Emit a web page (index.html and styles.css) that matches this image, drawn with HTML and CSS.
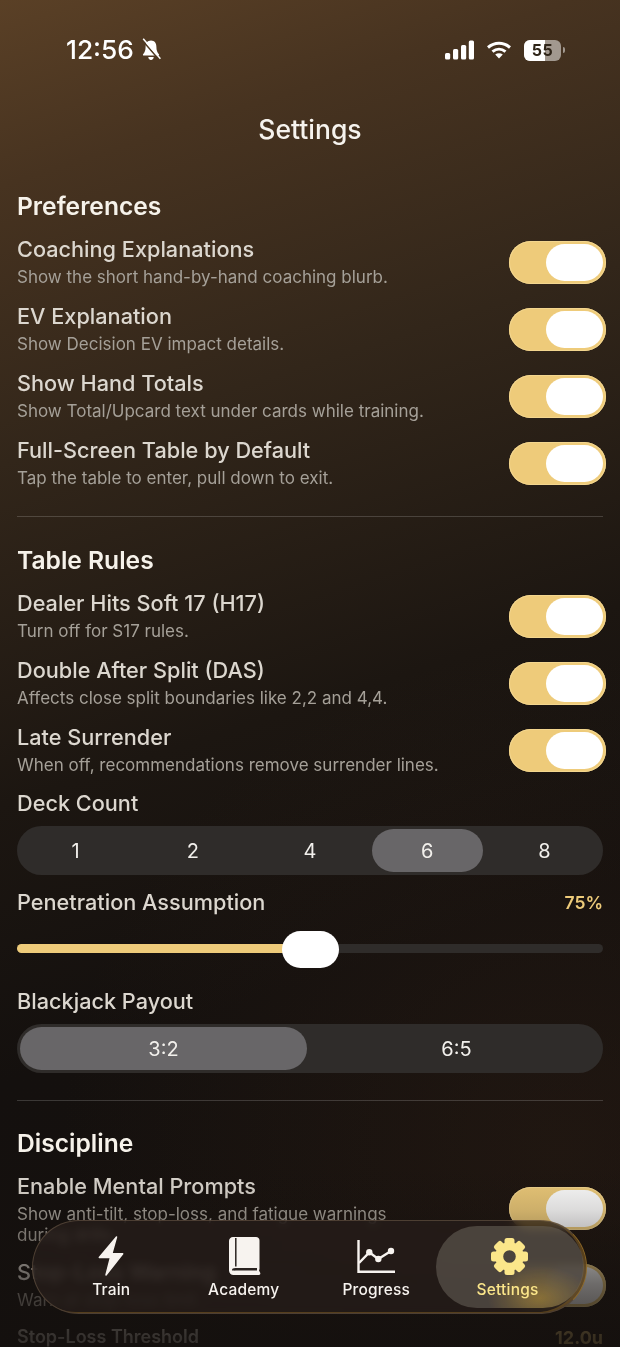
FILE: index.html
```html
<!DOCTYPE html>
<html lang="en">
<head>
<meta charset="utf-8">
<title>Settings</title>
<link rel="stylesheet" href="styles.css">
</head>
<body>
<div class="screen">
  <header class="status">
    <div class="status-left">
      <span class="time">12:56</span>
      <svg class="bell" viewBox="0 0 20 24" width="20" height="24"><path class="bell-body" d="M10 2.500c-3.600 0-5.400 2.800-5.400 6.200 0 3.700-.8 5.400-2.500 7.500-.5.600-.1 1.300.6 1.300h14.600c.7 0 1.100-.7.600-1.300-1.700-2.100-2.500-3.800-2.500-7.500 0-3.400-1.800-6.200-5.400-6.200z"/><path class="bell-body" d="M7.300 19h5.400c0 1.600-1.200 2.900-2.700 2.900s-2.700-1.300-2.700-2.900z"/><path class="bell-cut" d="M.8 1.800l17.800 20.400"/><path class="bell-slash" d="M2.200 .8l17.200 20"/></svg>
    </div>
    <div class="status-right">
      <svg viewBox="0 0 29 20" width="29" height="20" class="signal"><rect x="0" y="13" width="5.200" height="6.500" rx="1.500"/><rect x="8" y="9" width="5.200" height="10.500" rx="1.500"/><rect x="16" y="5" width="5.200" height="14.500" rx="1.500"/><rect x="23.800" y=".5" width="5.200" height="19" rx="1.500"/></svg>
      <svg viewBox="0 0 26 20" width="26" height="20" class="wifi"><path class="wifi-arc" d="M2 7.500c6.500-5.600 15.500-5.600 22 0"/><path class="wifi-arc" d="M6.500 11.700c4-3.300 9-3.300 13 0"/><path class="wifi-dot" d="M13 18.500l-3.800-3.900c2.200-1.700 5.400-1.700 7.600 0z"/></svg>
      <div class="battery"><span class="battery-fill"></span><span class="battery-num">55</span></div>
      <span class="battery-cap"></span>
    </div>
  </header>

  <h1 class="title">Settings</h1>

  <main class="content">
    <section class="section">
      <h2 class="heading">Preferences</h2>
      <div class="row"><div class="row-text"><div class="row-title">Coaching Explanations</div><div class="row-sub">Show the short hand-by-hand coaching blurb.</div></div><span class="toggle"><span class="knob"></span></span></div>
      <div class="row"><div class="row-text"><div class="row-title">EV Explanation</div><div class="row-sub">Show Decision EV impact details.</div></div><span class="toggle"><span class="knob"></span></span></div>
      <div class="row"><div class="row-text"><div class="row-title">Show Hand Totals</div><div class="row-sub">Show Total/Upcard text under cards while training.</div></div><span class="toggle"><span class="knob"></span></span></div>
      <div class="row row-end"><div class="row-text"><div class="row-title">Full-Screen Table by Default</div><div class="row-sub">Tap the table to enter, pull down to exit.</div></div><span class="toggle"><span class="knob"></span></span></div>
    </section>

    <hr class="divider">

    <section class="section">
      <h2 class="heading">Table Rules</h2>
      <div class="row"><div class="row-text"><div class="row-title">Dealer Hits Soft 17 (H17)</div><div class="row-sub">Turn off for S17 rules.</div></div><span class="toggle"><span class="knob"></span></span></div>
      <div class="row"><div class="row-text"><div class="row-title">Double After Split (DAS)</div><div class="row-sub">Affects close split boundaries like 2,2 and 4,4.</div></div><span class="toggle"><span class="knob"></span></span></div>
      <div class="row row-end"><div class="row-text"><div class="row-title">Late Surrender</div><div class="row-sub">When off, recommendations remove surrender lines.</div></div><span class="toggle"><span class="knob"></span></span></div>

      <div class="label label-deck">Deck Count</div>
      <div class="segment segment-five">
        <span class="seg">1</span><span class="seg">2</span><span class="seg">4</span><span class="seg seg-on">6</span><span class="seg">8</span>
      </div>

      <div class="label-row">
        <span class="label">Penetration Assumption</span>
        <span class="value">75%</span>
      </div>
      <div class="slider"><span class="track"><span class="track-fill"></span></span><span class="slider-knob"></span></div>

      <div class="label label-payout">Blackjack Payout</div>
      <div class="segment segment-two">
        <span class="seg seg-on">3:2</span><span class="seg">6:5</span>
      </div>
    </section>

    <hr class="divider divider-two">

    <section class="section">
      <h2 class="heading">Discipline</h2>
      <div class="row"><div class="row-text"><div class="row-title">Enable Mental Prompts</div><div class="row-sub row-sub-wrap">Show anti-tilt, stop-loss, and fatigue warnings during drills.</div></div><span class="toggle"><span class="knob"></span></span></div>
      <div class="row row-end"><div class="row-text"><div class="row-title">Stop-Loss Warning</div><div class="row-sub">Warn at stop-loss limit.</div></div><span class="toggle"><span class="knob"></span></span></div>
      <div class="label-row label-row-last">
        <span class="label label-small">Stop-Loss Threshold</span>
        <span class="value value-large">12.0u</span>
      </div>
    </section>
  </main>

  <div class="fade"></div>

  <nav class="tabbar">
    <a class="tab">
      <svg viewBox="0 0 40 40" width="40" height="40"><path class="ico-bolt" d="M25.500 1 8.300 21.500h11.200L15 39 31.700 17.800H20.800z"/></svg>
      <span class="tab-label">Train</span>
    </a>
    <a class="tab">
      <svg viewBox="0 0 40 40" width="40" height="40"><path class="ico-fill" d="M9 1h23c2 0 3.500 1.500 3.500 3.500V33l-.5 1.500 1.200 2.300c.5 1-.1 2.200-1.300 2.200H9.500C7 39 5 37 5 34.500V5c0-2.300 1.700-4 4-4z"/><path class="ico-gap" d="M11.800 2v28.500"/><path class="ico-band" d="M33 33.300H11.500c-1.300 0-2.300.5-2.300 1.100"/></svg>
      <span class="tab-label">Academy</span>
    </a>
    <a class="tab">
      <svg viewBox="0 0 40 40" width="40" height="40"><path class="ico-line" d="M2.500 4v31.800H39"/><path class="ico-line" d="M3 27 13.300 16.300 22.300 23 35 15"/><circle class="ico-fill" cx="13.300" cy="16.300" r="3.200"/><circle class="ico-fill" cx="22.300" cy="23" r="3.200"/><circle class="ico-fill" cx="35" cy="15" r="3.200"/></svg>
      <span class="tab-label">Progress</span>
    </a>
    <a class="tab tab-on">
      <svg viewBox="0 0 40 40" width="40" height="40"><g class="gear" transform="translate(1.500 .5)"><circle cx="20" cy="20" r="10.300"/><g class="gear-teeth"><rect x="15" y="1.500" width="10" height="9" rx="2.500"/><rect x="15" y="29.500" width="10" height="9" rx="2.500"/><rect x="1.500" y="15" width="9" height="10" rx="2.500"/><rect x="29.500" y="15" width="9" height="10" rx="2.500"/><rect x="15" y="1.500" width="10" height="9" rx="2.500" transform="rotate(45 20 20)"/><rect x="15" y="29.500" width="10" height="9" rx="2.500" transform="rotate(45 20 20)"/><rect x="1.500" y="15" width="9" height="10" rx="2.500" transform="rotate(45 20 20)"/><rect x="29.500" y="15" width="9" height="10" rx="2.500" transform="rotate(45 20 20)"/></g></g></svg>
      <span class="tab-label">Settings</span>
    </a>
  </nav>
</div>
</body>
</html>
```
FILE: styles.css
```css
* { box-sizing: border-box; }
html, body { margin: 0; height: 1347px; overflow: hidden; background: #15110e; }
body { font-family: Inter, "Liberation Sans", sans-serif; color: #fff; }

.screen {
  position: relative;
  width: 620px;
  height: 1347px;
  overflow: hidden;
  background:
    radial-gradient(500px 500px at 560px 1150px, rgba(60, 38, 24, .28), rgba(60, 38, 24, 0)),
    linear-gradient(162deg, #5a4026 0%, #473320 12%, #32261a 30%, #1c1611 52%, #14100e 70%, #16110e 100%);
}

/* status bar */
.status { height: 100px; display: flex; align-items: center; justify-content: space-between; padding: 0 55px 0 66px; }
.status-left { display: flex; align-items: center; gap: 7px; }
.time { font-size: 26.300px; font-weight: 500; line-height: 30px; }
.bell-body { fill: #fff; }
.bell-cut { stroke: #4f3921; stroke-width: 1.600; fill: none; }
.bell-slash { stroke: #fff; stroke-width: 1.500; fill: none; }
.status-right { display: flex; align-items: center; gap: 12px; }
.signal rect { fill: #fff; }
.wifi-arc { fill: none; stroke: #fff; stroke-width: 3; }
.wifi-dot { fill: #fff; }
.battery { position: relative; width: 37px; height: 21px; border-radius: 6px; background: rgba(255, 255, 255, .5); overflow: hidden; display: flex; align-items: center; justify-content: center; }
.battery-fill { position: absolute; inset: 0 16px 0 0; background: #fff; }
.battery-num { position: relative; color: #2e2418; font-size: 16px; font-weight: 700; letter-spacing: .5px; }
.battery-cap { width: 2px; height: 6px; margin-left: -10px; border-radius: 0 2px 2px 0; background: rgba(255, 255, 255, .5); }

.title { margin: 0; height: 60px; font-size: 26.500px; font-weight: 500; line-height: 58px; text-align: center; color: #f6f3ee; }

/* content */
.content { padding: 31px 17px 0; }
.heading { margin: 0 0 13px; font-size: 24.600px; font-weight: 600; line-height: 30px; color: #f6f2ea; }
.row { display: flex; justify-content: space-between; align-items: center; margin: 0 -3px 11px 0; }
.section > .row-end { margin-bottom: 0; }
.row-text { width: 425px; }
.row-title { font-size: 21.700px; font-weight: 500; line-height: 30px; color: #dcd7cf; }
.row-sub { font-size: 17px; line-height: 26px; color: #a5a098; }
.row-sub-wrap { line-height: 21px; padding-top: 3px; }
.toggle { flex: none; display: flex; justify-content: flex-end; align-items: center; width: 97px; height: 43px; padding-right: 3px; border-radius: 22px; background: #eecb7a; box-shadow: inset 0 0 0 1px #f3d68f; }
.knob { width: 57px; height: 37px; border-radius: 19px; background: #fff; }

.divider { margin: 25px 0 28px; border: 0; height: 1px; background: rgba(255, 255, 255, .17); }
.divider-two { margin: 27px 0 27px; }

.label { font-size: 21.700px; font-weight: 500; line-height: 30px; color: #dcd7cf; }
.label-small { font-size: 18px; font-weight: 600; }
.label-deck { margin-top: 10px; }
.label-payout { margin-top: 18px; }
.label-row { display: flex; justify-content: space-between; align-items: center; margin-top: 12px; }
.label-row-last { margin-top: 9px; }
.value { font-size: 17.500px; font-weight: 600; color: #eecb7a; }
.value-large { font-size: 18px; font-weight: 700; }

.segment { display: grid; height: 49px; margin-top: 8px; border-radius: 25px; background: #2f2c2a; }
.segment-five { grid-template-columns: repeat(5, 1fr); }
.segment-two { grid-template-columns: repeat(2, 1fr); }
.seg { display: flex; align-items: center; justify-content: center; margin: 3px; border-radius: 22px; font-size: 20px; line-height: 1; color: #f2f0ec; }
.seg-on { background: #686668; }

.slider { position: relative; height: 37px; margin-top: 14px; padding-top: 13px; }
.track { display: block; width: 100%; height: 9px; border-radius: 5px; background: #2f2c2a; overflow: hidden; }
.track-fill { display: block; width: 46%; height: 100%; background: #eecb7a; }
.slider-knob { position: absolute; top: 0; left: 265px; width: 57px; height: 37px; border-radius: 19px; background: #fff; }

/* bottom fade over scrolled content */
.fade { position: absolute; left: 0; right: 0; bottom: 0; height: 180px; background: linear-gradient(180deg, rgba(20, 16, 14, 0) 0%, rgba(20, 16, 14, .15) 24%, rgba(20, 16, 14, .62) 65%, rgba(20, 16, 14, .84) 95%); }

/* tab bar */
.tabbar {
  position: absolute; left: 32px; top: 1220px;
  display: flex; align-items: stretch;
  width: 555px; height: 94px;
  padding: 5px 0 5px 12px;
  border: 1px solid rgba(150, 125, 100, .38);
  border-right-color: rgba(150, 110, 40, .9);
  border-radius: 47px;
  background: rgba(38, 30, 27, .74);
  -webkit-backdrop-filter: blur(4px) saturate(1.6);
  backdrop-filter: blur(4px) saturate(1.6);
  box-shadow: inset -3px -1px 0 rgba(130, 95, 35, .55);
}
.tab { display: flex; flex-direction: column; align-items: center; width: 132.500px; padding-top: 10px; color: #f7f3ef; }
.tab-on {
  width: 148px; margin-left: -7px; padding-right: 4px; border-radius: 42px; color: #fbe68a;
  background:
    radial-gradient(52px 32px at 70% 88%, rgba(190, 150, 50, .5), rgba(190, 150, 50, 0)),
    rgba(104, 96, 88, .58);
}
.tab-label { margin-top: 3px; font-size: 15.500px; font-weight: 500; line-height: 22px; letter-spacing: .2px; }
.ico-fill { fill: #f7f3ef; }
.ico-bolt { fill: #f7f3ef; stroke: #f7f3ef; stroke-width: 1.500; stroke-linejoin: round; }
.ico-gap { fill: none; stroke: #2a2320; stroke-width: 1.500; }
.ico-band { fill: none; stroke: #2a2320; stroke-width: 2.500; }
.ico-line { fill: none; stroke: #f7f3ef; stroke-width: 2.400; }
.gear circle { fill: none; stroke: #fbe68a; stroke-width: 8; }
.gear-teeth rect { fill: #fbe68a; }
```
